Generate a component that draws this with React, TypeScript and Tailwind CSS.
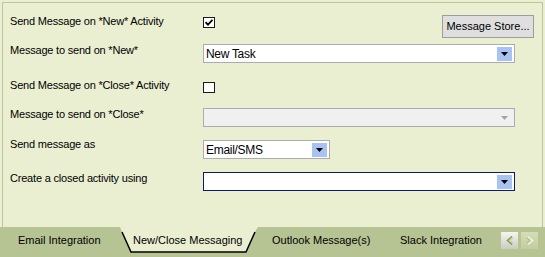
import React from "react";

const font = { fontFamily: '"Liberation Sans", Arial, sans-serif' };

function Arrow({ disabled }: { disabled?: boolean }) {
  return (
    <div
      className={
        "absolute right-[2px] top-[2px] w-[15px] h-[14px] flex items-center justify-center " +
        (disabled ? "" : "bg-[#a8c2f2]")
      }
    >
      <svg width="7" height="4" viewBox="0 0 7 4">
        <path d="M0 0H7L3.5 4Z" fill={disabled ? "#a3a3a3" : "#000000"} />
      </svg>
    </div>
  );
}

function Combo({
  width,
  value,
  disabled,
  focused,
}: {
  width: number;
  value?: string;
  disabled?: boolean;
  focused?: boolean;
}) {
  return (
    <div
      className={
        "relative h-[19px] border " +
        (focused
          ? "border-[#0b1a6e] bg-white"
          : disabled
          ? "border-[#a9adb3] bg-[#f0f0f0]"
          : "border-[#a9adb3] bg-white")
      }
      style={{ width }}
    >
      <span className="absolute left-[2px] top-[2px] text-[12px] leading-[14px] tracking-[-0.3px] text-black">
        {value}
      </span>
      <Arrow disabled={disabled} />
    </div>
  );
}

function Check({ checked }: { checked?: boolean }) {
  return (
    <div className="w-[12px] h-[11px] border border-[#1a1a1a] bg-white flex items-center justify-center mt-[2px]">
      {checked && (
        <svg width="8" height="7" viewBox="0 0 8 7">
          <path d="M0.5 3.2L3 5.7L7.5 0.8" stroke="#000" strokeWidth="1.8" fill="none" />
        </svg>
      )}
    </div>
  );
}

function Label({ children, mt = 0 }: { children: React.ReactNode; mt?: number }) {
  return (
    <div
      className="w-[193px] shrink-0 text-[11px] leading-[13px] tracking-[-0.2px] text-black"
      style={{ marginTop: mt }}
    >
      {children}
    </div>
  );
}

export default function App() {
  return (
    <div className="w-[545px] h-[257px] bg-[#eaefd2] flex flex-col overflow-hidden" style={font}>
      <div className="mx-[2px] mt-[2px] h-[225px] border-l border-t border-r border-[#bcc5a2] pl-[7px] pt-[12px] flex flex-col">
        <div className="flex items-start h-[29px]">
          <Label>Send Message on *New* Activity</Label>
          <Check checked />
          <button className="ml-auto mr-[8px] w-[92px] h-[23px] bg-[#dfdfdf] border border-[#9d9d9d] text-[11px] text-black leading-[13px]">
            Message Store...
          </button>
        </div>
        <div className="flex items-start h-[36px]">
          <Label mt={0}>Message to send on *New*</Label>
          <Combo width={312} value="New Task" />
        </div>
        <div className="flex items-start h-[28px]">
          <Label mt={-1}>Send Message on *Close* Activity</Label>
          <Check />
        </div>
        <div className="flex items-start h-[32px]">
          <Label>Message to send on *Close*</Label>
          <Combo width={312} disabled />
        </div>
        <div className="flex items-start h-[32px]">
          <Label mt={-2}>Send message as</Label>
          <Combo width={127} value="Email/SMS" />
        </div>
        <div className="flex items-start">
          <Label>Create a closed activity using</Label>
          <Combo width={312} focused />
        </div>
      </div>
      <div className="relative flex-1 bg-[#b6c393] flex items-start text-[11px] text-black">
        <div className="w-[120px] pl-[18px] mt-[7px] leading-[13px]">Email Integration</div>
        <div className="relative w-[138px] h-[28px]">
          <svg className="absolute left-0 top-0" width="138" height="28" viewBox="0 0 138 28">
            <path d="M0 0 L138 0 L135 5 L126 25 L11 25 L2 5 Z" fill="#eaefd2" />
            <path d="M2 5 L11 25 L126 25 L135 5" stroke="#000" strokeWidth="1.5" fill="none" />
          </svg>
          <div className="absolute left-[13px] top-[7px] leading-[13px]">New/Close Messaging</div>
        </div>
        <div className="w-[142px] pl-[14px] mt-[7px] leading-[13px]">Outlook Message(s)</div>
        <div className="mt-[7px] leading-[13px]">Slack Integration</div>
        <div className="absolute left-[501px] top-[5px] flex gap-[3px]">
          <div className="w-[17px] h-[17px] bg-gradient-to-b from-[#f5f5f0] to-[#c9cdc0] flex items-center justify-center">
            <svg width="8" height="9" viewBox="0 0 8 9">
              <path d="M6 0.5 L1.5 4.5 L6 8.5" stroke="#8a9a5a" strokeWidth="1.6" fill="none" />
              <path d="M7 2 L4 4.5 L7 7" stroke="#c0cc98" strokeWidth="1" fill="none" />
            </svg>
          </div>
          <div className="w-[17px] h-[17px] bg-gradient-to-b from-[#d6ddb6] to-[#c2cc9e] flex items-center justify-center">
            <svg width="8" height="9" viewBox="0 0 8 9">
              <path d="M2 0.5 L6.5 4.5 L2 8.5" stroke="#eef2dc" strokeWidth="1.6" fill="none" />
              <path d="M1 2 L4 4.5 L1 7" stroke="#a8b47c" strokeWidth="1" fill="none" />
            </svg>
          </div>
        </div>
      </div>
    </div>
  );
}
